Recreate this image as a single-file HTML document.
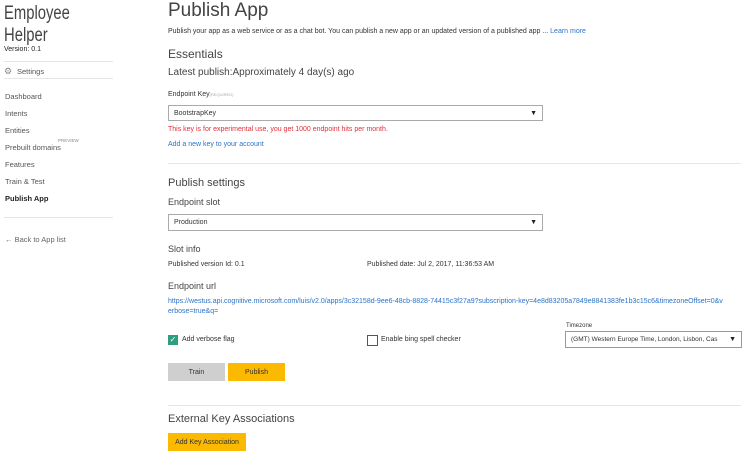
<!DOCTYPE html>
<html><head><meta charset="utf-8"><style>
body{margin:0;width:754px;height:460px;background:#fff;font-family:"Liberation Sans",sans-serif;color:#333;position:relative;overflow:hidden}
.a{position:absolute;white-space:nowrap}
.s{font-size:7px}
.nav{font-size:7.5px;color:#555;left:5px}
.hr{position:absolute;height:1px;background:#e6e6e6}
.sel{position:absolute;border:1px solid #aaa;background:#fff;font-size:7px;box-sizing:border-box;padding-left:5px;display:flex;align-items:center}
.sel:after{content:"▼";position:absolute;right:5px;font-size:7px;color:#222}
.btn{position:absolute;font-size:7px;display:flex;align-items:center;justify-content:center}
.link{color:#2b73c9}
.t{transform-origin:0 0;transform:scaleX(0.78)}
</style></head><body>
<div class="a t" style="left:4px;top:3px;font-size:19px;color:#444">Employee</div>
<div class="a t" style="left:4px;top:25px;font-size:19px;color:#444">Helper</div>
<div class="a s" style="left:4px;top:46px;color:#222">Version: 0.1</div>
<div class="hr" style="left:4px;top:61px;width:109px"></div>
<div class="a" style="left:4px;top:66px;font-size:9px;color:#888">⚙</div>
<div class="a nav" style="left:17px;top:67px">Settings</div>
<div class="hr" style="left:4px;top:78px;width:109px"></div>
<div class="a nav" style="top:92px">Dashboard</div>
<div class="a nav" style="top:109px">Intents</div>
<div class="a nav" style="top:126px">Entities</div>
<div class="a nav" style="top:143px">Prebuilt domains</div>
<div class="a" style="left:58px;top:138px;font-size:4.5px;color:#888">PREVIEW</div>
<div class="a nav" style="top:160px">Features</div>
<div class="a nav" style="top:177px">Train &amp; Test</div>
<div class="a nav" style="top:194px;color:#222;font-weight:bold">Publish App</div>
<div class="hr" style="left:4px;top:217px;width:109px"></div>
<div class="a nav" style="top:235px;color:#666">← Back to App list</div>

<div class="a" style="left:168px;top:0px;font-size:19px;color:#444">Publish App</div>
<div class="a s" style="left:168px;top:28px;color:#333">Publish your app as a web service or as a chat bot. You can publish a new app or an updated version of a published app ... <span class="link">Learn more</span></div>
<div class="a" style="left:168px;top:47px;font-size:12px;color:#444">Essentials</div>
<div class="a" style="left:168px;top:67px;font-size:10px;color:#444">Latest publish:Approximately 4 day(s) ago</div>
<div class="a s" style="left:168px;top:91px">Endpoint Key<span style="font-size:4px;color:#aaa">(REQUIRED)</span></div>
<div class="sel" style="left:168px;top:105px;width:375px;height:16px">BootstrapKey</div>
<div class="a s" style="left:168px;top:126px;color:#e0303a">This key is for experimental use, you get 1000 endpoint hits per month.</div>
<div class="a s link" style="left:168px;top:141px">Add a new key to your account</div>
<div class="hr" style="left:168px;top:163px;width:573px"></div>
<div class="a" style="left:168px;top:177px;font-size:11px;color:#444">Publish settings</div>
<div class="a" style="left:168px;top:197px;font-size:9px;color:#444">Endpoint slot</div>
<div class="sel" style="left:168px;top:214px;width:375px;height:17px">Production</div>
<div class="a" style="left:168px;top:244px;font-size:9px;color:#444">Slot info</div>
<div class="a s" style="left:168px;top:261px">Published version Id: 0.1</div>
<div class="a s" style="left:367px;top:261px">Published date: Jul 2, 2017, 11:36:53 AM</div>
<div class="a" style="left:168px;top:281px;font-size:9px;color:#444">Endpoint url</div>
<div class="a s link" style="left:168px;top:298px">https://westus.api.cognitive.microsoft.com/luis/v2.0/apps/3c32158d-9ee6-48cb-8828-74415c3f27a9?subscription-key=4e8d83205a7849e8841383fe1b3c15c6&amp;timezoneOffset=0&amp;v</div>
<div class="a s link" style="left:168px;top:308px">erbose=true&amp;q=</div>
<div class="a" style="left:566px;top:323px;font-size:6px">Timezone</div>
<div class="a" style="left:168px;top:335px;width:10px;height:10px;background:#2e9e7e;color:#fff;font-size:8px;line-height:10px;text-align:center">✓</div>
<div class="a s" style="left:182px;top:336px">Add verbose flag</div>
<div class="a" style="left:367px;top:335px;width:9px;height:9px;border:1px solid #555"></div>
<div class="a s" style="left:381px;top:336px">Enable bing spell checker</div>
<div class="sel" style="left:565px;top:331px;width:177px;height:17px;font-size:6.5px;border-color:#999">(GMT) Western Europe Time, London, Lisbon, Cas</div>
<div class="btn" style="left:168px;top:363px;width:57px;height:18px;background:#cfcfcf">Train</div>
<div class="btn" style="left:228px;top:363px;width:57px;height:18px;background:#fbb900">Publish</div>
<div class="hr" style="left:168px;top:405px;width:573px"></div>
<div class="a" style="left:168px;top:413px;font-size:11px;color:#444">External Key Associations</div>
<div class="btn" style="left:168px;top:433px;width:78px;height:18px;background:#fbb900">Add Key Association</div>
</body></html>
